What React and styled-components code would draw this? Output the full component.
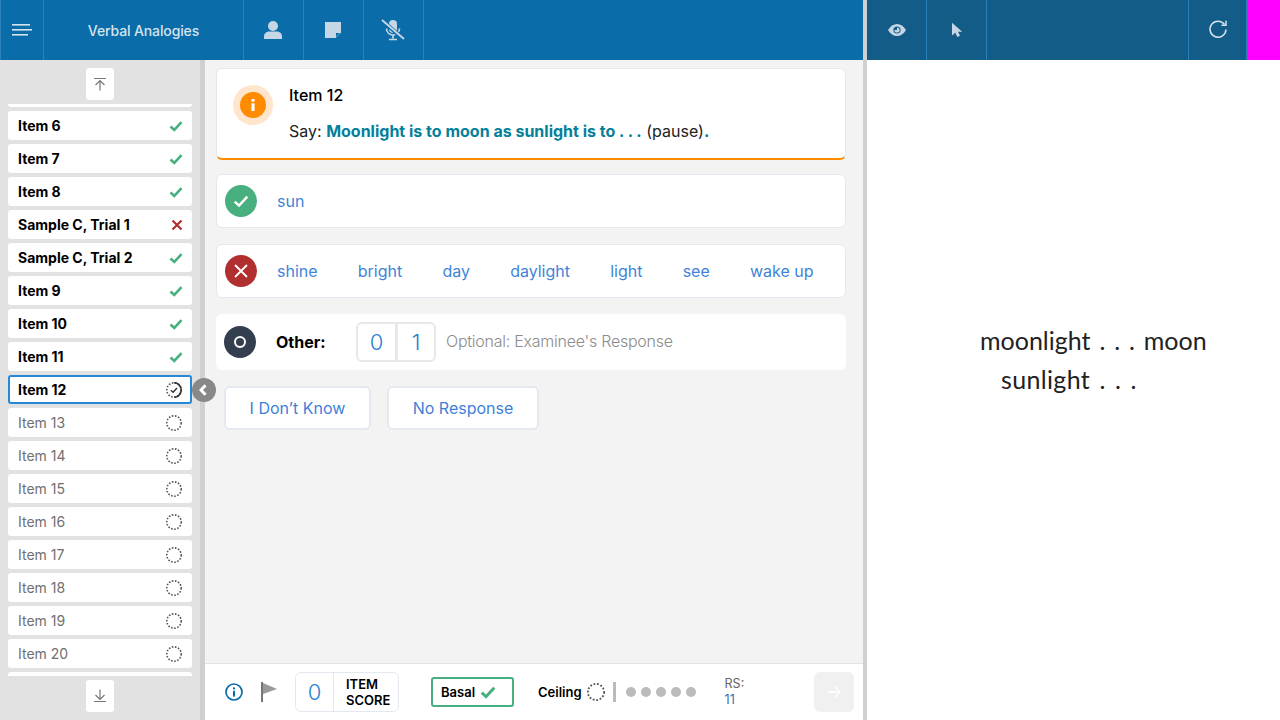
import styled, { createGlobalStyle } from 'styled-components';

const GlobalStyle = createGlobalStyle`
  html, body {
    margin: 0;
    padding: 0;
    height: 720px;
    overflow: hidden;
    background: #fff;
    font-family: Inter, "Liberation Sans", sans-serif;
  }
  * {
    box-sizing: border-box;
  }
`;

// first and last rows are scrolled almost out of view, only their edge shows
const ITEMS = [
  { label: '', state: 'hidden' },
  { label: 'Item 6', state: 'right' },
  { label: 'Item 7', state: 'right' },
  { label: 'Item 8', state: 'right' },
  { label: 'Sample C, Trial 1', state: 'wrong' },
  { label: 'Sample C, Trial 2', state: 'right' },
  { label: 'Item 9', state: 'right' },
  { label: 'Item 10', state: 'right' },
  { label: 'Item 11', state: 'right' },
  { label: 'Item 12', state: 'current' },
  { label: 'Item 13', state: 'todo' },
  { label: 'Item 14', state: 'todo' },
  { label: 'Item 15', state: 'todo' },
  { label: 'Item 16', state: 'todo' },
  { label: 'Item 17', state: 'todo' },
  { label: 'Item 18', state: 'todo' },
  { label: 'Item 19', state: 'todo' },
  { label: 'Item 20', state: 'todo' },
  { label: '', state: 'hidden' },
];

const WRONG_ANSWERS = ['shine', 'bright', 'day', 'daylight', 'light', 'see', 'wake up'];

function Check({ size = 14, color = '#48b07f', width = 2.6 }) {
  return (
    <svg width={size} height={size} viewBox="0 0 14 14" fill="none">
      <path d="M1.5 7.5 5.3 11 12.5 3.2" stroke={color} strokeWidth={width} />
    </svg>
  );
}

function Cross() {
  return (
    <svg width="12" height="12" viewBox="0 0 12 12" fill="none">
      <path d="M1.5 1.5 10.5 10.5M10.5 1.5 1.5 10.5" stroke="#b22f2f" strokeWidth="2.2" />
    </svg>
  );
}

function DottedCircle({ size = 16 }) {
  return (
    <svg width={size} height={size} viewBox="0 0 16 16" fill="none">
      <circle cx="8" cy="8" r="7.2" stroke="#555" strokeWidth="1.6" strokeDasharray="1.6 1.55" />
    </svg>
  );
}

function CurrentCircle() {
  return (
    <svg width="16" height="16" viewBox="0 0 16 16" fill="none">
      <circle cx="8" cy="8" r="7.2" stroke="#555" strokeWidth="1.6" strokeDasharray="1.6 1.55" />
      <path d="M8 .8A7.2 7.2 0 0 1 8 15.200" stroke="#333" strokeWidth="1.600" />
      <path d="M4.800 8.200 7.100 10.300 11 6" stroke="#333" strokeWidth="1.400" />
    </svg>
  );
}

function StatusIcon({ state }) {
  if (state === 'right') return <Check />;
  if (state === 'wrong') return <Cross />;
  if (state === 'current') return <CurrentCircle />;
  if (state === 'todo') return <DottedCircle />;
  return null;
}

export default function App() {
  return (
    <Page>
      <GlobalStyle />
      <LeftPane>
        <TopBar>
          <MenuCell>
            <svg width="20" height="12" viewBox="0 0 20 12" fill="#d5e3ee">
              <rect x="0" y="0" width="18" height="1.6" />
              <rect x="0" y="5" width="20" height="1.6" />
              <rect x="0" y="10" width="16" height="1.6" />
            </svg>
          </MenuCell>
          <TitleCell>Verbal Analogies</TitleCell>
          <IconCell>
            <svg width="20" height="20" viewBox="0 0 20 20" fill="#c5d6e4">
              <circle cx="10" cy="6" r="5" />
              <path d="M1 19v-2.4C1 13.4 3.6 11.6 6.5 11.6h7c2.9 0 5.5 1.8 5.5 5V19Z" />
            </svg>
          </IconCell>
          <IconCell>
            <svg width="16" height="16" viewBox="0 0 16 16">
              <path d="M0 0H16V10.500L10.500 16H0Z" fill="#c5d6e4" />
              <path d="M11 15V11H15Z" fill="#0a6ca8" />
            </svg>
          </IconCell>
          <IconCell>
            <svg width="26" height="22" viewBox="0 0 26 22" fill="none">
              <rect x="9" y="1" width="8" height="13" rx="4" fill="#c5d6e4" />
              <path d="M6.500 9.500c0 4 2.800 6.500 6.500 6.500s6.500-2.500 6.500-6.500M13 16v3.500M9 20.500h8" stroke="#c5d6e4" strokeWidth="1.700" />
              <path d="M2 1.500 24 20.500" stroke="#0a6ca8" strokeWidth="4" />
              <path d="M2 1 24 20" stroke="#c5d6e4" strokeWidth="2" />
            </svg>
          </IconCell>
        </TopBar>
        <Body>
          <Sidebar>
            <ScrollButton>
              <svg width="14" height="14" viewBox="0 0 14 14" fill="none" stroke="#777" strokeWidth="1.200">
                <path d="M1 1.500H13M7 13.500V3.500M2.500 8 7 3.500 11.500 8" />
              </svg>
            </ScrollButton>
            <ItemList>
              {ITEMS.map((item, i) => (
                <ItemRow key={i} $state={item.state}>
                  <span>{item.label}</span>
                  <StatusSlot $state={item.state}>
                    <StatusIcon state={item.state} />
                  </StatusSlot>
                </ItemRow>
              ))}
            </ItemList>
            <ScrollButton>
              <svg width="14" height="14" viewBox="0 0 14 14" fill="none" stroke="#777" strokeWidth="1.200">
                <path d="M1 12.500H13M7 .5V10.500M2.500 6 7 10.500 11.500 6" />
              </svg>
            </ScrollButton>
          </Sidebar>
          <Gutter>
            <CollapseHandle>
              <svg width="8" height="12" viewBox="0 0 8 12" fill="none">
                <path d="M6.500 1.200 2 6l4.500 4.800" stroke="#fff" strokeWidth="3" />
              </svg>
            </CollapseHandle>
          </Gutter>
          <Main>
            <Content>
              <PromptCard>
                <InfoHalo>
                  <InfoDot>
                    <svg width="4" height="12" viewBox="0 0 4 12" fill="#fff">
                      <rect x="0.400" y="0" width="3.200" height="2.800" rx="1" />
                      <rect x="0.400" y="4.200" width="3.200" height="7.800" rx="0.600" />
                    </svg>
                  </InfoDot>
                </InfoHalo>
                <PromptText>
                  <PromptTitle>Item 12</PromptTitle>
                  <PromptLine>
                    Say: <Strong>Moonlight is to moon as sunlight is to . . .</Strong> (pause)<Strong>.</Strong>
                  </PromptLine>
                </PromptText>
              </PromptCard>
              <AnswerRow>
                <ScoreBadge $bg="#48b07f">
                  <Check size={16} color="#fff" width={2.200} />
                </ScoreBadge>
                <Answers>
                  <Answer>sun</Answer>
                </Answers>
              </AnswerRow>
              <AnswerRow>
                <ScoreBadge $bg="#b22f2f">
                  <svg width="14" height="14" viewBox="0 0 14 14" fill="none">
                    <path d="M1 1 13 13M13 1 1 13" stroke="#fff" strokeWidth="1.800" />
                  </svg>
                </ScoreBadge>
                <Answers>
                  {WRONG_ANSWERS.map((word) => (
                    <Answer key={word}>{word}</Answer>
                  ))}
                </Answers>
              </AnswerRow>
              <OtherRow>
                <ScoreBadge $bg="#333f4f">
                  <OtherRing />
                </ScoreBadge>
                <OtherLabel>Other:</OtherLabel>
                <ScoreToggle>
                  <ScoreDigit>0</ScoreDigit>
                  <ScoreDigit>1</ScoreDigit>
                </ScoreToggle>
                <Optional>Optional: Examinee's Response</Optional>
              </OtherRow>
              <ActionRow>
                <ActionButton $width={147}>I Don’t Know</ActionButton>
                <ActionButton $width={152}>No Response</ActionButton>
              </ActionRow>
            </Content>
            <Footer>
              <svg width="18" height="18" viewBox="0 0 18 18" fill="none">
                <circle cx="9" cy="9" r="8" stroke="#0a6ca8" strokeWidth="1.700" />
                <rect x="8" y="4.400" width="2" height="2" fill="#0a6ca8" />
                <rect x="8" y="7.800" width="2" height="5.800" fill="#0a6ca8" />
              </svg>
              <FlagSlot>
                <svg width="16" height="20" viewBox="0 0 16 20">
                  <rect x="0" y="0" width="2" height="20" fill="#777" />
                  <path d="M2 1 16 7 2 12Z" fill="#999" />
                </svg>
              </FlagSlot>
              <ItemScore>
                <ItemScoreValue>0</ItemScoreValue>
                <ItemScoreLabel>ITEM<br />SCORE</ItemScoreLabel>
              </ItemScore>
              <BasalBox>
                Basal <Check size={16} />
              </BasalBox>
              <Ceiling>
                Ceiling <DottedCircle size={18} />
              </Ceiling>
              <Separator />
              <Dots>
                {[0, 1, 2, 3, 4].map((n) => <Dot key={n} />)}
              </Dots>
              <RawScore>
                RS:
                <RawValue>11</RawValue>
              </RawScore>
              <NextButton>
                <svg width="14" height="14" viewBox="0 0 14 14" fill="none" stroke="#fff" strokeWidth="1.300">
                  <path d="M1 7H13M7.500 1.500 13 7l-5.500 5.500" />
                </svg>
              </NextButton>
            </Footer>
          </Main>
        </Body>
      </LeftPane>
      <PaneDivider />
      <RightPane>
        <RightBar>
          <RightTools>
            <DarkCell>
              <svg width="20" height="14" viewBox="0 0 20 14">
                <path d="M1 7C3.500 3 6.500 1 10 1s6.500 2 9 6c-2.500 4-5.500 6-9 6S3.500 11 1 7Z" fill="#c5d6e4" />
                <circle cx="10" cy="7" r="3.600" fill="#135c88" />
                <path d="M10 7V4.400A2.600 2.600 0 1 1 7.400 7Z" fill="#c5d6e4" />
              </svg>
            </DarkCell>
            <DarkCell>
              <svg width="12" height="16" viewBox="0 0 12 16">
                <path d="M1 .8V13.500L4.300 10.800 6.300 15 9 13.800 7 9.800H11.200Z" fill="#c5d6e4" />
              </svg>
            </DarkCell>
            <ToolSpacer />
            <DarkCell $leftBorder>
              <svg width="20" height="20" viewBox="0 0 20 20" fill="none" stroke="#d5e3ee" strokeWidth="1.500">
                <path d="M16.500 4.500A8 8 0 1 0 18 9.500" />
                <path d="M18 .8V5.300H13.500" />
              </svg>
            </DarkCell>
          </RightTools>
          <MagentaBlock />
        </RightBar>
        <Stimulus>
          <div>moonlight . . . moon</div>
          <StimulusSecond>sunlight . . .</StimulusSecond>
        </Stimulus>
      </RightPane>
    </Page>
  );
}

const Page = styled.div`
  display: flex;
  width: 1280px;
  height: 720px;
  overflow: hidden;
`;

const LeftPane = styled.div`
  display: flex;
  flex-direction: column;
  width: 863px;
  height: 100%;
`;

const TopBar = styled.div`
  display: flex;
  height: 60px;
  background: #0a6ca8;
`;

const MenuCell = styled.div`
  display: flex;
  align-items: center;
  justify-content: center;
  width: 44px;
  padding-right: 1px;
  border-left: 1px solid #2a80b8;
  border-right: 1px solid #2a80b8;
`;

const TitleCell = styled.div`
  display: flex;
  align-items: center;
  justify-content: center;
  width: 200px;
  font-size: 14px;
  font-weight: 500;
  letter-spacing: -0.125px;
  color: #d5e3ee;
  border-right: 1px solid #2a80b8;
`;

const IconCell = styled.div`
  display: flex;
  align-items: center;
  justify-content: center;
  width: 60px;
  padding-right: 1px;
  border-right: 1px solid #2a80b8;
`;

const Body = styled.div`
  display: flex;
  flex: 1;
  min-height: 0;
`;

const Sidebar = styled.div`
  display: flex;
  flex-direction: column;
  align-items: center;
  width: 200px;
  padding: 8px 0;
  background: #e2e2e2;
`;

const ScrollButton = styled.div`
  display: flex;
  flex: none;
  align-items: center;
  justify-content: center;
  width: 28px;
  height: 32px;
  background: #fff;
  border-radius: 3px;
`;

const ItemList = styled.div`
  display: flex;
  flex: 1;
  flex-direction: column;
  gap: 4px;
  width: 100%;
  min-height: 0;
  margin: 4px 0;
  padding: 0 8px;
  overflow: hidden;

  & > :first-child {
    margin-top: -26px;
  }
`;

const ItemRow = styled.div`
  display: flex;
  flex: none;
  align-items: center;
  justify-content: space-between;
  height: 29px;
  background: #fff;
  border-radius: 3px;
  font-size: 14px;
  font-weight: ${(p) => (p.$state === 'todo' ? 400 : 700)};
  color: ${(p) => (p.$state === 'todo' ? '#707070' : '#000')};
  border: ${(p) => (p.$state === 'current' ? '2px solid #2788d8' : 'none')};
  padding-left: ${(p) => (p.$state === 'current' ? '8px' : '10px')};
  padding-right: ${(p) => (p.$state === 'current' ? '6px' : '8px')};
`;

const StatusSlot = styled.div`
  display: flex;
  align-items: center;
  justify-content: center;
  width: 20px;
  height: 18px;
  padding-left: ${(p) => ({ right: 4, wrong: 6 }[p.$state] || 0)}px;
`;

const Gutter = styled.div`
  position: relative;
  width: 5px;
  background: #d0d0d0;
`;

const CollapseHandle = styled.div`
  position: absolute;
  left: -8px;
  top: 318px;
  display: flex;
  align-items: center;
  justify-content: center;
  width: 24px;
  height: 24px;
  padding-right: 2px;
  background: #888;
  border-radius: 50%;
`;

const Main = styled.div`
  display: flex;
  flex: 1;
  flex-direction: column;
  min-width: 0;
  background: #f3f3f3;
`;

const Content = styled.div`
  display: flex;
  flex: 1;
  flex-direction: column;
  padding: 8px 17px 0 11px;
`;

const PromptCard = styled.div`
  display: flex;
  flex: none;
  height: 92px;
  margin-bottom: -2px;
  padding: 16px 16px 0 16px;
  background: #fff;
  border: 1px solid #e4e8f0;
  border-bottom: 2px solid #ff8b00;
  border-radius: 6px;
`;

const InfoHalo = styled.div`
  display: flex;
  flex: none;
  align-items: center;
  justify-content: center;
  width: 40px;
  height: 40px;
  background: #ffe5cc;
  border-radius: 50%;
`;

const InfoDot = styled.div`
  display: flex;
  align-items: center;
  justify-content: center;
  width: 26px;
  height: 26px;
  background: #ff8b00;
  border-radius: 50%;
`;

const PromptText = styled.div`
  display: flex;
  flex-direction: column;
  gap: 16px;
  margin-left: 16px;
`;

const PromptTitle = styled.div`
  font-size: 16px;
  font-weight: 500;
  line-height: 20px;
  color: #000;
`;

const PromptLine = styled.div`
  font-size: 16px;
  line-height: 20px;
  color: #222;
`;

const Strong = styled.b`
  font-weight: 700;
  color: #04809a;
`;

const AnswerRow = styled.div`
  display: flex;
  flex: none;
  align-items: center;
  height: 54px;
  margin-top: 16px;
  padding-left: 8px;
  background: #fff;
  border: 1px solid #e4e8f0;
  border-radius: 6px;
`;

const ScoreBadge = styled.div`
  display: flex;
  flex: none;
  align-items: center;
  justify-content: center;
  width: 32px;
  height: 32px;
  background: ${(p) => p.$bg};
  border-radius: 50%;
`;

const Answers = styled.div`
  display: flex;
  gap: 40.2px;
  margin-left: 20px;
`;

const Answer = styled.span`
  font-size: 16px;
  color: #3f84d8;
`;

const OtherRow = styled.div`
  display: flex;
  flex: none;
  align-items: center;
  height: 56px;
  margin-top: 16px;
  padding-left: 8px;
  background: #fff;
  border-radius: 6px;
`;

const OtherRing = styled.div`
  width: 12px;
  height: 12px;
  border: 2.5px solid #fff;
  border-radius: 50%;
`;

const OtherLabel = styled.div`
  width: 80px;
  margin-left: 20px;
  font-size: 16px;
  font-weight: 700;
  color: #000;
`;

const ScoreToggle = styled.div`
  display: flex;
  height: 40px;
  border: 2px solid #e8e8e8;
  border-radius: 6px;
`;

const ScoreDigit = styled.div`
  display: flex;
  align-items: center;
  justify-content: center;
  width: 37px;
  font-size: 22px;
  font-weight: 300;
  color: #2a7fd0;

  & + & {
    width: 39px;
    border-left: 3px solid #e8e8e8;
  }
`;

const Optional = styled.div`
  margin-left: 10px;
  padding-bottom: 2px;
  font-size: 16px;
  font-weight: 300;
  letter-spacing: -0.25px;
  color: #8c8c8c;
`;

const ActionRow = styled.div`
  display: flex;
  flex: none;
  gap: 16px;
  margin-top: 16px;
  padding-left: 8px;
`;

const ActionButton = styled.div`
  display: flex;
  align-items: center;
  justify-content: center;
  width: ${(p) => p.$width}px;
  height: 44px;
  background: #fff;
  border: 2px solid #e4e8f0;
  border-radius: 6px;
  font-size: 16px;
  color: #3f7fd8;
`;

const Footer = styled.div`
  display: flex;
  flex: none;
  align-items: center;
  height: 57px;
  padding: 0 9px 0 20px;
  background: #fff;
  border-top: 1px solid #e2e2e2;
`;

const FlagSlot = styled.div`
  display: flex;
  margin-left: 18px;
`;

const ItemScore = styled.div`
  display: flex;
  align-items: stretch;
  height: 40px;
  margin-left: 18px;
  border: 1px solid #e4e8f0;
  border-radius: 6px;
`;

const ItemScoreValue = styled.div`
  display: flex;
  align-items: center;
  justify-content: center;
  width: 38px;
  font-size: 22px;
  font-weight: 300;
  color: #2a7fd0;
  border-right: 1px solid #e4e8f0;
`;

const ItemScoreLabel = styled.div`
  align-self: center;
  width: 64px;
  padding-left: 12px;
  font-size: 13px;
  font-weight: 600;
  line-height: 16px;
  color: #000;
`;

const BasalBox = styled.div`
  display: flex;
  align-items: center;
  gap: 5px;
  width: 83px;
  height: 30px;
  margin-left: 32px;
  padding-left: 8px;
  border: 2px solid #48b07f;
  border-radius: 3px;
  font-size: 13px;
  font-weight: 600;
  color: #000;
`;

const Ceiling = styled.div`
  display: flex;
  align-items: center;
  gap: 5px;
  margin-left: 24px;
  font-size: 13px;
  font-weight: 600;
  color: #000;
`;

const Separator = styled.div`
  width: 3px;
  height: 20px;
  margin-left: 8px;
  background: #bbb;
`;

const Dots = styled.div`
  display: flex;
  gap: 5px;
  margin-left: 10px;
`;

const Dot = styled.div`
  width: 10px;
  height: 10px;
  background: #bbb;
  border-radius: 50%;
`;

const RawScore = styled.div`
  width: 60px;
  margin-left: 29px;
  font-size: 12.500px;
  line-height: 16px;
  color: #666;
`;

const RawValue = styled.div`
  color: #3a6db0;
`;

const NextButton = styled.div`
  display: flex;
  align-items: center;
  justify-content: center;
  width: 40px;
  height: 40px;
  margin-left: auto;
  background: #f0f0f0;
  border-radius: 6px;
`;

const PaneDivider = styled.div`
  width: 4px;
  background: #d0d0d0;
`;

const RightPane = styled.div`
  display: flex;
  flex: 1;
  flex-direction: column;
  min-width: 0;
  background: #fff;
`;

const RightBar = styled.div`
  display: flex;
  height: 60px;
`;

const RightTools = styled.div`
  display: flex;
  flex: 1;
  background: #135c88;
`;

const DarkCell = styled.div`
  display: flex;
  align-items: center;
  justify-content: center;
  width: 60px;
  border-right: 1px solid #2a80b8;
  ${(p) => p.$leftBorder && 'border-left: 1px solid #2a80b8; width: 59px;'}
`;

const ToolSpacer = styled.div`
  flex: 1;
`;

const MagentaBlock = styled.div`
  width: 33px;
  background: #ff00ff;
`;

const Stimulus = styled.div`
  padding: 261px 0 0 113px;
  font-family: Lato, "Noto Sans", sans-serif;
  font-size: 25px;
  line-height: 39px;
  word-spacing: 2.5px;
  color: #222;
  white-space: nowrap;
`;

const StimulusSecond = styled.div`
  margin-left: 21px;
  letter-spacing: 0.35px;
`;
